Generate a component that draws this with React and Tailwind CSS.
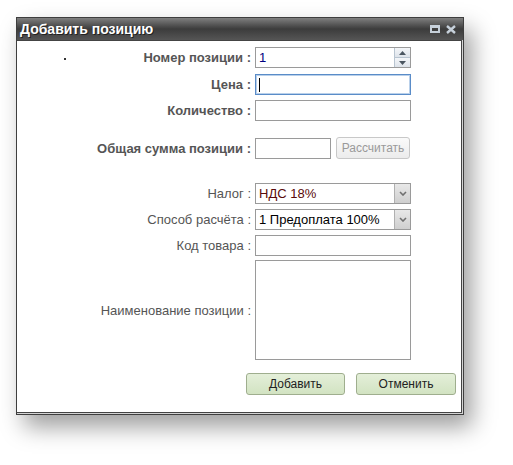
const FONT = { fontFamily: '"Liberation Sans", Arial, sans-serif' };

function Label({ children, bold, className = "" }) {
  return (
    <div
      className={`w-[238px] shrink-0 pr-[4px] text-right text-[13px] leading-[21px] text-[#555] ${bold ? "font-bold" : ""} ${className}`}
    >
      {children}
    </div>
  );
}

function TextBox({ w = "w-[156px]", focused, children }) {
  return (
    <div
      className={`${w} h-[21px] bg-white border ${focused ? "border-[#5a8cc8] shadow-[inset_0_0_0_1px_#b9d0ea]" : "border-[#9a9a9a]"} flex items-center pl-[3px] text-[13px]`}
    >
      {children}
    </div>
  );
}

function Spinner() {
  return (
    <div className="w-[156px] h-[21px] bg-white border border-[#9a9a9a] flex items-center text-[13px]">
      <span className="pl-[3px] flex-1 text-[#000080]">1</span>
      <div className="w-[16px] h-full flex flex-col border-l border-[#b8c4d0]">
        <div className="flex-1 bg-gradient-to-b from-[#f4f6f9] to-[#dde3ea] border-b border-[#b8c4d0] flex items-center justify-center">
          <svg width="7" height="4" viewBox="0 0 7 4"><path d="M0 4 L3.5 0 L7 4 Z" fill="#4a5560" /></svg>
        </div>
        <div className="flex-1 bg-gradient-to-b from-[#f4f6f9] to-[#dde3ea] flex items-center justify-center">
          <svg width="7" height="4" viewBox="0 0 7 4"><path d="M0 0 L3.5 4 L7 0 Z" fill="#4a5560" /></svg>
        </div>
      </div>
    </div>
  );
}

function Select({ value, color }) {
  return (
    <div className="w-[156px] h-[21px] bg-white border border-[#9a9a9a] flex items-center text-[13px]">
      <span className="pl-[3px] flex-1" style={{ color }}>{value}</span>
      <div className="w-[16px] h-[19px] bg-gradient-to-b from-[#e8e8e8] to-[#cfcfcf] border-l border-[#b0b0b0] flex items-center justify-center">
        <svg width="8" height="5" viewBox="0 0 8 5"><path d="M1 1 L4 4 L7 1" stroke="#707070" strokeWidth="1.6" fill="none" /></svg>
      </div>
    </div>
  );
}

function Row({ children, className = "" }) {
  return <div className={`flex items-center ${className}`}>{children}</div>;
}

export default function App() {
  return (
    <div className="w-[513px] h-[465px] bg-white pt-[17px] pl-[16px]" style={FONT}>
      <div className="w-[448px] h-[398px] border border-[#3e3e3e] bg-[#d4d4d4] flex flex-col shadow-[8px_12px_22px_rgba(0,0,0,0.38)]">
        {/* title */}
        <div className="h-[22px] shrink-0 flex items-center bg-gradient-to-b from-[#808080] via-[#3c3c3c] to-[#555555] px-[3px]">
          <span className="flex-1 text-white font-bold text-[14px] [text-shadow:1px_1px_0_#222]">Добавить позицию</span>
          <div className="flex items-center gap-[6px] pr-[4px]">
            <div className="w-[10px] h-[8px] border-[2px] border-[#c6d0da] border-t-[3px]" />
            <svg width="10" height="9" viewBox="0 0 10 9">
              <path d="M1 1 L9 8 M9 1 L1 8" stroke="#c6d0da" strokeWidth="2.4" />
            </svg>
          </div>
        </div>

        {/* body */}
        <div className="flex-1 mr-px mb-px border-r border-b border-t border-[#444] bg-white pt-[6px] relative">
          <div className="absolute left-[47px] top-[17px] w-[2px] h-[2px] bg-[#333]" />

          <Row>
            <Label bold>Номер позиции :</Label>
            <Spinner />
          </Row>
          <Row className="mt-[6px]">
            <Label bold>Цена :</Label>
            <TextBox focused>
              <span className="w-px h-[14px] bg-black" />
            </TextBox>
          </Row>
          <Row className="mt-[5px]">
            <Label bold>Количество :</Label>
            <TextBox />
          </Row>
          <Row className="mt-[16px]">
            <Label bold>Общая сумма позиции :</Label>
            <TextBox w="w-[76px]" />
            <button className="ml-[5px] w-[74px] h-[22px] rounded-[3px] border border-[#c8c8c8] bg-gradient-to-b from-[#fafafa] to-[#ececec] text-[12px] text-[#9a9a9a]">
              Рассчитать
            </button>
          </Row>
          <Row className="mt-[24px]">
            <Label>Налог :</Label>
            <Select value="НДС 18%" color="#5a0a0a" />
          </Row>
          <Row className="mt-[5px]">
            <Label>Способ расчёта :</Label>
            <Select value="1 Предоплата 100%" color="#000" />
          </Row>
          <Row className="mt-[5px]">
            <Label>Код товара :</Label>
            <TextBox />
          </Row>
          <Row className="mt-[4px]">
            <Label>Наименование позиции :</Label>
            <div className="w-[156px] h-[100px] bg-white border border-[#9a9a9a]" />
          </Row>

          <div className="flex justify-end gap-[11px] pr-[5px] mt-[13px]">
            <button className="w-[99px] h-[22px] rounded-[3px] border border-[#9fae8e] bg-gradient-to-b from-[#e4efd9] to-[#d2e3c2] text-[12px] text-[#222]">
              Добавить
            </button>
            <button className="w-[100px] h-[22px] rounded-[3px] border border-[#9fae8e] bg-gradient-to-b from-[#e4efd9] to-[#d2e3c2] text-[12px] text-[#222]">
              Отменить
            </button>
          </div>
        </div>
      </div>
    </div>
  );
}
